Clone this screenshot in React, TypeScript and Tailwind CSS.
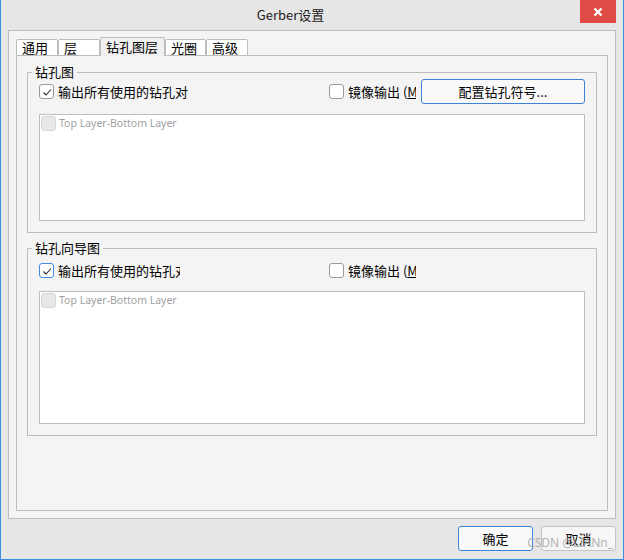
import React from 'react';

const CheckMark: React.FC = () => (
  <svg width="15" height="15" viewBox="0 0 15 15" className="absolute inset-0">
    <path d="M3.5 7.5 L6 10 L11 4.5" fill="none" stroke="#2b2b2b" strokeWidth="1.1" />
  </svg>
);

interface BoxProps {
  checked?: boolean;
  focused?: boolean;
  disabled?: boolean;
}

const Box: React.FC<BoxProps> = ({ checked, focused, disabled }) => {
  if (disabled) {
    return <span className="w-[15px] h-[15px] shrink-0 rounded-[3px] border border-[#d6d6d6] bg-[#e8e8e8]" />;
  }
  return (
    <span
      className={`relative w-[15px] h-[15px] shrink-0 rounded-[3px] border bg-white ${
        focused ? 'border-[#3c8ce0]' : 'border-[#9a9a9a]'
      }`}
    >
      {checked && <CheckMark />}
    </span>
  );
};

const Mirror: React.FC = () => (
  <div className="flex items-center gap-[4px] w-[92px] shrink-0">
    <Box />
    <span className="w-[68px] overflow-hidden whitespace-nowrap">
      镜像输出 (<span className="underline">M</span>)
    </span>
  </div>
);

const LayerList: React.FC<{ height: string }> = ({ height }) => (
  <div className={`bg-white border border-[#bdbdbd] px-[1px] pt-[1px] ${height}`}>
    <div className="flex items-center gap-[3px]">
      <Box disabled />
      <span className="font-['Noto_Sans',sans-serif] text-[10.5px] text-[#a0a0a0]">Top Layer-Bottom Layer</span>
    </div>
  </div>
);

const tabs = ['通用', '层', '钻孔图层', '光圈', '高级'];
const tabWidths = ['w-[42px]', 'w-[42px]', 'w-[65px]', 'w-[41px]', 'w-[42px]'];

export default function App() {
  return (
    <div className="relative w-[624px] h-[560px] bg-[#e6e6e6] border-x border-b border-[#3b8de3] flex flex-col text-[13px] text-black font-['Noto_Sans_CJK_SC','Noto_Sans',sans-serif]">
      {/* title bar */}
      <div className="flex h-[30px] shrink-0">
        <div className="flex-1 flex items-center justify-center text-[13px] text-[#1a1a1a]">Gerber设置</div>
        <button className="w-[36px] h-[23px] mr-[7px] bg-[#e04c45] flex items-center justify-center">
          <svg width="10" height="10" viewBox="0 0 10 10">
            <path d="M1.5 1.5 L8.5 8.5 M8.5 1.5 L1.5 8.5" stroke="white" strokeWidth="2.4" />
          </svg>
        </button>
      </div>

      {/* outer panel */}
      <div className="mx-[7px] h-[489px] border border-[#bdbdbd] bg-[#f4f4f4] px-[7px] pt-[6px] pb-[7px] flex flex-col">
        <div className="flex items-end h-[19px] relative z-10">
          {tabs.map((t, i) => {
            const active = i === 2;
            return (
              <div
                key={t}
                className={`${tabWidths[i]} flex items-center pl-[5px] rounded-t-[2px] border-t border-x border-[#bdbdbd] ${
                  active ? 'h-[19px] bg-[#f0f0f0]' : 'h-[17px] bg-white border-b'
                }`}
              >
                {t}
              </div>
            );
          })}
        </div>

        <div className="-mt-px h-[456px] border border-[#bdbdbd] bg-[#f4f4f4] px-[10px] pt-[9px]">
          <fieldset className="border border-[#bdbdbd] p-0 m-0">
            <legend className="ml-[4px] px-[3px] leading-[14px]">钻孔图</legend>
            <div className="px-[11px] pb-[11px]">
              <div className="flex items-center h-[25px]">
                <div className="flex items-center gap-[4px] w-[290px] shrink-0">
                  <Box checked />
                  <span className="whitespace-nowrap">输出所有使用的钻孔对</span>
                </div>
                <Mirror />
                <button className="w-[164px] h-[25px] shrink-0 rounded-[3px] border border-[#3c85d6] bg-[#f9f9f9]">
                  配置钻孔符号...
                </button>
              </div>
              <div className="mt-[10px]">
                <LayerList height="h-[107px]" />
              </div>
            </div>
          </fieldset>

          <fieldset className="mt-[8px] border border-[#bdbdbd] p-0 m-0">
            <legend className="ml-[4px] px-[3px] leading-[14px]">钻孔向导图</legend>
            <div className="px-[11px] pb-[11px]">
              <div className="flex items-center h-[25px] mt-[3px]">
                <div className="flex items-center gap-[4px] w-[290px] shrink-0">
                  <Box checked focused />
                  <span className="w-[122px] overflow-hidden whitespace-nowrap">输出所有使用的钻孔对</span>
                </div>
                <Mirror />
              </div>
              <div className="mt-[8px]">
                <LayerList height="h-[133px]" />
              </div>
            </div>
          </fieldset>
        </div>
      </div>

      {/* dialog buttons */}
      <div className="flex justify-end gap-[8px] pr-[7px] mt-[7px]">
        <button className="w-[75px] h-[25px] rounded-[3px] border border-[#3c85d6] bg-[#f9f9f9]">确定</button>
        <button className="w-[75px] h-[25px] rounded-[3px] border border-[#c3c3c3] bg-[#f6f6f6]">取消</button>
      </div>

      <span className="absolute right-[10px] bottom-[7px] text-[12px] text-[#a9a9a9]/90 font-['Noto_Sans',sans-serif] pointer-events-none">
        CSDN @LIANn_
      </span>
    </div>
  );
}
